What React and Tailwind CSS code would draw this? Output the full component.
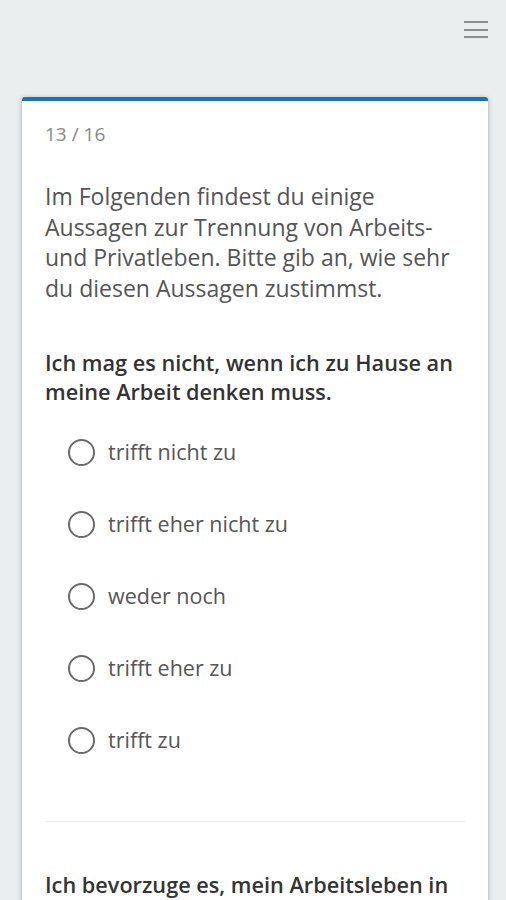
import { useState } from 'react';

const OPTIONS = ['trifft nicht zu', 'trifft eher nicht zu', 'weder noch', 'trifft eher zu', 'trifft zu'];

function Radio({ label, checked, onChange }) {
  return (
    <label className="flex items-center h-[72px] pl-[23px] cursor-pointer">
      <span className="w-[27px] h-[27px] rounded-full border-[2.5px] border-[#6b6b6b] flex items-center justify-center shrink-0">
        {checked && <span className="w-[13px] h-[13px] rounded-full bg-[#1a73b8]" />}
      </span>
      <input type="radio" className="hidden" checked={checked} onChange={onChange} />
      <span className="ml-[13px] text-[21.5px] text-[#555]">{label}</span>
    </label>
  );
}

export default function App() {
  const [answer, setAnswer] = useState(null);

  return (
    <div className="min-h-[900px] bg-[#e9eeef] font-['Segoe_UI','Open_Sans',sans-serif]">
      {/* top bar */}
      <div className="h-[97px] flex justify-end pt-[21px] pr-[18px]">
        <button className="w-[24px] h-[17px] flex flex-col justify-between">
          <span className="h-[2px] w-full bg-[#8a8f91]" />
          <span className="h-[2px] w-full bg-[#8a8f91]" />
          <span className="h-[2px] w-full bg-[#8a8f91]" />
        </button>
      </div>

      <div className="ml-[22px] mr-[18px] bg-white border-t-[4px] border-[#1a73b8] rounded-t-[3px] shadow-[0_1px_5px_rgba(0,0,0,0.3)] px-[23px] pt-[20px] pb-10">
        <div className="text-[19px] text-[#888] leading-[26px]">13 / 16</div>

        <p className="mt-[34px] text-[23px] leading-[30.5px] text-[#555]">
          Im Folgenden findest du einige Aussagen zur Trennung von Arbeits- und Privatleben. Bitte gib an, wie sehr du diesen Aussagen zustimmst.
        </p>

        <h2 className="mt-[45px] text-[21.7px] leading-[29px] font-semibold text-[#333]">
          Ich mag es nicht, wenn ich zu Hause an meine Arbeit denken muss.
        </h2>

        <div className="mt-[10px]">
          {OPTIONS.map((o, i) => (
            <Radio key={o} label={o} checked={answer === i} onChange={() => setAnswer(i)} />
          ))}
        </div>

        <div className="mt-[45px] h-[1px] bg-[#eceeee]" />

        <h2 className="mt-[48px] text-[21.7px] leading-[29px] font-semibold text-[#333]">
          Ich bevorzuge es, mein Arbeitsleben in meiner Freizeit zu vergessen.
        </h2>
      </div>
    </div>
  );
}
